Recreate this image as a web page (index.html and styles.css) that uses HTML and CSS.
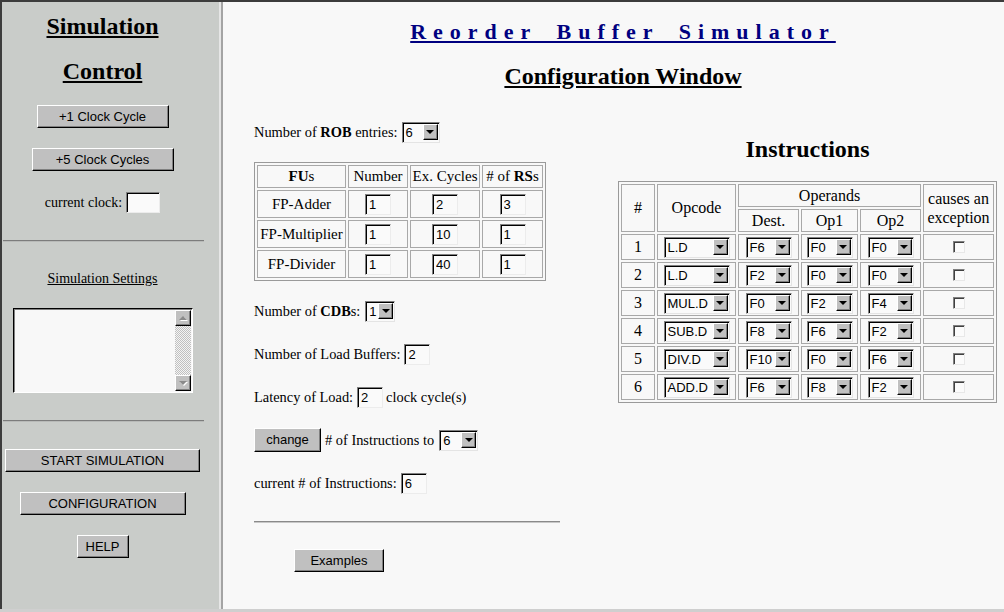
FILE: index.html
```html
<!DOCTYPE html>
<html>
<head>
<meta charset="utf-8">
<title>Reorder Buffer Simulator</title>
<link rel="stylesheet" href="styles.css">
</head>
<body>
<div class="frames">
  <aside class="control">
    <h2 class="ctl-title"><u>Simulation</u><br><u>Control</u></h2>
    <button class="awt b1">+1 Clock Cycle</button>
    <button class="awt b5">+5 Clock Cycles</button>
    <div class="clock"><span>current clock:</span><input class="field clockbox" type="text" value=""></div>
    <hr class="rule">
    <div class="settings-label">Simulation Settings</div>
    <div class="ta">
      <div class="ta-body"></div>
      <div class="vscroll">
        <span class="sb-btn up"></span>
        <span class="sb-track"></span>
        <span class="sb-btn down"></span>
      </div>
    </div>
    <hr class="rule rule2">
    <button class="awt start">START SIMULATION</button>
    <button class="awt cfg">CONFIGURATION</button>
    <button class="awt help">HELP</button>
  </aside>
  <div class="split"></div>
  <main class="config">
    <div class="page">
      <h1 class="title">Reorder Buffer Simulator</h1>
      <h2 class="subtitle">Configuration Window</h2>
      <div class="columns">
        <section class="params">
          <div class="row rob"><span>Number of <b>ROB</b> entries:</span><span class="sel w-rob"><span class="sel-val">6</span><span class="sel-btn"></span></span></div>
          <table class="fu">
            <colgroup><col class="c1"><col class="c2"><col class="c3"><col class="c4"></colgroup>
            <tr class="hd"><th><b>FU</b>s</th><th>Number</th><th>Ex. Cycles</th><th># of <b>RS</b>s</th></tr>
            <tr><td>FP-Adder</td><td><input class="field fin" type="text" value="1"></td><td><input class="field fin" type="text" value="2"></td><td><input class="field fin" type="text" value="3"></td></tr>
            <tr><td>FP-Multiplier</td><td><input class="field fin" type="text" value="1"></td><td><input class="field fin" type="text" value="10"></td><td><input class="field fin" type="text" value="1"></td></tr>
            <tr><td>FP-Divider</td><td><input class="field fin" type="text" value="1"></td><td><input class="field fin" type="text" value="40"></td><td><input class="field fin" type="text" value="1"></td></tr>
          </table>
          <div class="row cdb"><span>Number of <b>CDB</b>s:</span><span class="sel w-cdb"><span class="sel-val">1</span><span class="sel-btn"></span></span></div>
          <div class="row more"><span>Number of Load Buffers:</span><input class="field fin" type="text" value="2"></div>
          <div class="row more"><span>Latency of Load:</span><input class="field fin" type="text" value="2"><span class="tight">clock cycle(s)</span></div>
          <div class="row more"><button class="awt change">change</button><span># of Instructions to</span><span class="sel w-n"><span class="sel-val">6</span><span class="sel-btn"></span></span></div>
          <div class="row more"><span>current # of Instructions:</span><input class="field fin" type="text" value="6"></div>
          <hr class="prule">
          <button class="awt examples">Examples</button>
        </section>
        <section class="instr">
          <h2 class="instr-title">Instructions</h2>
          <table class="it">
            <colgroup><col class="k1"><col class="k2"><col class="k3"><col class="k4"><col class="k5"><col class="k6"></colgroup>
            <tr class="h1"><th rowspan="2">#</th><th rowspan="2">Opcode</th><th colspan="3">Operands</th><th rowspan="2" class="exc">causes an<br>exception</th></tr>
            <tr class="h2"><th>Dest.</th><th>Op1</th><th>Op2</th></tr>
            <tr><td>1</td><td><span class="sel w-op"><span class="sel-val">L.D</span><span class="sel-btn"></span></span></td><td><span class="sel w-reg"><span class="sel-val">F6</span><span class="sel-btn"></span></span></td><td><span class="sel w-reg"><span class="sel-val">F0</span><span class="sel-btn"></span></span></td><td><span class="sel w-reg"><span class="sel-val">F0</span><span class="sel-btn"></span></span></td><td><input type="checkbox" class="cb"></td></tr>
            <tr><td>2</td><td><span class="sel w-op"><span class="sel-val">L.D</span><span class="sel-btn"></span></span></td><td><span class="sel w-reg"><span class="sel-val">F2</span><span class="sel-btn"></span></span></td><td><span class="sel w-reg"><span class="sel-val">F0</span><span class="sel-btn"></span></span></td><td><span class="sel w-reg"><span class="sel-val">F0</span><span class="sel-btn"></span></span></td><td><input type="checkbox" class="cb"></td></tr>
            <tr><td>3</td><td><span class="sel w-op"><span class="sel-val">MUL.D</span><span class="sel-btn"></span></span></td><td><span class="sel w-reg"><span class="sel-val">F0</span><span class="sel-btn"></span></span></td><td><span class="sel w-reg"><span class="sel-val">F2</span><span class="sel-btn"></span></span></td><td><span class="sel w-reg"><span class="sel-val">F4</span><span class="sel-btn"></span></span></td><td><input type="checkbox" class="cb"></td></tr>
            <tr><td>4</td><td><span class="sel w-op"><span class="sel-val">SUB.D</span><span class="sel-btn"></span></span></td><td><span class="sel w-reg"><span class="sel-val">F8</span><span class="sel-btn"></span></span></td><td><span class="sel w-reg"><span class="sel-val">F6</span><span class="sel-btn"></span></span></td><td><span class="sel w-reg"><span class="sel-val">F2</span><span class="sel-btn"></span></span></td><td><input type="checkbox" class="cb"></td></tr>
            <tr><td>5</td><td><span class="sel w-op"><span class="sel-val">DIV.D</span><span class="sel-btn"></span></span></td><td><span class="sel w-reg"><span class="sel-val">F10</span><span class="sel-btn"></span></span></td><td><span class="sel w-reg"><span class="sel-val">F0</span><span class="sel-btn"></span></span></td><td><span class="sel w-reg"><span class="sel-val">F6</span><span class="sel-btn"></span></span></td><td><input type="checkbox" class="cb"></td></tr>
            <tr><td>6</td><td><span class="sel w-op"><span class="sel-val">ADD.D</span><span class="sel-btn"></span></span></td><td><span class="sel w-reg"><span class="sel-val">F6</span><span class="sel-btn"></span></span></td><td><span class="sel w-reg"><span class="sel-val">F8</span><span class="sel-btn"></span></span></td><td><span class="sel w-reg"><span class="sel-val">F2</span><span class="sel-btn"></span></span></td><td><input type="checkbox" class="cb"></td></tr>
          </table>
        </section>
      </div>
    </div>
  </main>
</div>
</body>
</html>
```

FILE: styles.css
```css
* { box-sizing: border-box; }
html, body { margin: 0; padding: 0; }
body {
  width: 1004px;
  height: 612px;
  overflow: hidden;
  font-family: "Liberation Serif", "Times New Roman", serif;
  color: #000;
  background: #cfcfcf;
}
.frames {
  display: flex;
  height: 612px;
  border-top: 2px solid #3c3c3c;
  border-bottom: 3px solid #cfcfcf;
}

/* ---------- left control frame ---------- */
.control {
  width: 219px;
  flex: none;
  background: #c9ccc9;
  border-left: 2px solid #3c3c3c;
  padding: 2px 16px 0 0;
  display: flex;
  flex-direction: column;
  align-items: center;
}
.ctl-title {
  margin: 0;
  font-size: 24px;
  line-height: 45px;
  font-weight: bold;
  text-align: center;
}
.awt {
  display: block;
  height: 23px;
  padding: 0;
  margin: 0;
  background: #c0c0c0;
  border: 1px solid;
  border-color: #ffffff #000000 #000000 #ffffff;
  box-shadow: inset -1px -1px 0 #808080;
  font-family: "Liberation Sans", Arial, sans-serif;
  font-size: 13px;
  color: #000;
  text-align: center;
  line-height: 20px;
}
.b1 { width: 132px; margin-top: 11px; }
.b5 { width: 142px; margin-top: 20px; }
.clock {
  display: flex;
  align-items: center;
  gap: 4px;
  margin-top: 21px;
  font-size: 14px;
}
.field {
  display: block;
  height: 21px;
  margin: 0;
  padding: 0 0 0 3px;
  border: 1px solid;
  border-color: #808080 #ececec #ececec #808080;
  box-shadow: inset 1px 1px 0 #000;
  background: #fafafa;
  font-family: "Liberation Sans", Arial, sans-serif;
  font-size: 13px;
  color: #000;
  outline: none;
}
.clockbox { width: 34px; }
.rule {
  width: 201px;
  margin: 27px 0 0 2px;
  height: 2px;
  border: 0;
  border-top: 1px solid #7c7c7c;
  border-bottom: 1px solid #b8bab8;
}
.settings-label {
  margin-top: 28px;
  font-size: 14px;
  line-height: 18px;
  text-decoration: underline;
}
.ta {
  width: 180px;
  height: 85px;
  margin-top: 20px;
  display: flex;
  border: 1px solid;
  border-color: #000 #ffffff #ffffff #000;
  box-shadow: inset 1px 1px 0 #808080;
  background: #f8f8f8;
}
.ta-body { flex: 1; }
.vscroll {
  width: 16px;
  display: flex;
  flex-direction: column;
  margin: 1px 1px 1px 0;
}
.sb-btn {
  height: 16px;
  flex: none;
  background: #c0c0c0;
  border: 1px solid;
  border-color: #ffffff #000 #000 #ffffff;
  box-shadow: inset -1px -1px 0 #808080;
  display: flex;
  align-items: center;
  justify-content: center;
}
.sb-btn::after {
  content: "";
  width: 0;
  height: 0;
  border-left: 4px solid transparent;
  border-right: 4px solid transparent;
}
.sb-btn.up::after { border-bottom: 4px solid #8a8a8a; filter: drop-shadow(1px 1px 0 #fff); }
.sb-btn.down::after { border-top: 4px solid #8a8a8a; filter: drop-shadow(1px 1px 0 #fff); }
.sb-track {
  flex: 1;
  background: repeating-conic-gradient(#c0c0c0 0 25%, #f4f4f4 0 50%) 0 0 / 2px 2px;
}
.rule2 { margin-top: 27px; }
.start { width: 195px; margin-top: 27px; }
.cfg { width: 166px; margin-top: 20px; }
.help { width: 52px; margin-top: 20px; }

/* ---------- frame divider ---------- */
.split {
  width: 4px;
  flex: none;
  border-left: 2px solid #e6e6e6;
  background: #a4a4a4;
}

/* ---------- right configuration frame ---------- */
.config {
  flex: 1;
  background: #f8f8f8;
  overflow: hidden;
}
.page {
  width: 800px;
  padding-top: 16px;
}
.title {
  margin: 0;
  font-size: 22px;
  line-height: 28px;
  font-weight: bold;
  color: #000080;
  text-align: center;
  letter-spacing: 7px;
  word-spacing: 7px;
  text-decoration: underline;
}
.subtitle {
  margin: 15px 0 0;
  font-size: 24px;
  line-height: 30px;
  font-weight: bold;
  text-align: center;
  text-decoration: underline;
}
.columns {
  display: flex;
  align-items: flex-start;
  padding-left: 31px;
}
.params {
  width: 306px;
  flex: none;
  padding-top: 29px;
  font-size: 14.4px;
}
.row {
  display: flex;
  align-items: center;
  gap: 4px;
  height: 24px;
  white-space: nowrap;
}
.row .tight { margin-left: -1px; }
.cdb { margin-top: 18px; gap: 5px; }
.more { margin-top: 19px; }

/* select imitation */
.sel {
  display: flex;
  height: 21px;
  flex: none;
  border: 1px solid;
  border-color: #808080 #e4e4e4 #e4e4e4 #808080;
  box-shadow: inset 1px 1px 0 #000;
  background: #fafafa;
  font-family: "Liberation Sans", Arial, sans-serif;
  font-size: 13px;
}
.sel-val {
  flex: 1;
  padding: 1px 0 0 3px;
  line-height: 17px;
  text-align: left;
  overflow: hidden;
}
.sel-btn {
  width: 15px;
  margin: 1px 1px 2px 0;
  flex: none;
  background: #c0c0c0;
  border: 1px solid;
  border-color: #ffffff #000 #000 #ffffff;
  box-shadow: inset -1px -1px 0 #808080;
  display: flex;
  align-items: center;
  justify-content: center;
}
.sel-btn::after {
  content: "";
  width: 0;
  height: 0;
  border-left: 4px solid transparent;
  border-right: 4px solid transparent;
  border-top: 4px solid #000;
  margin-top: 1px;
}
.w-rob { width: 38px; }
.w-cdb { width: 30px; }
.w-n { width: 39px; margin-left: 1px; }
.w-op { width: 66px; }
.w-reg { width: 46px; }

/* FU table */
.fu {
  margin-top: 18px;
  border: 1px solid #9a9a9a;
  border-spacing: 2px;
  table-layout: fixed;
  width: 292px;
  font-size: 15px;
}
.fu col.c1 { width: 89px; }
.fu col.c2 { width: 60px; }
.fu col.c3 { width: 70px; }
.fu col.c4 { width: 61px; }
.fu th, .fu td {
  border: 1px solid #a8a8a8;
  padding: 0;
  text-align: center;
  vertical-align: middle;
  white-space: nowrap;
}
.fu th { font-weight: normal; }
.fu tr { height: 28px; }
.fu tr.hd { height: 23px; }
.fin { width: 26px; }
.fu .fin { margin: 0 auto; }

.prule {
  width: 306px;
  margin: 26px 0 0;
  height: 2px;
  border: 0;
  border-top: 1px solid #8a8a8a;
  border-bottom: 1px solid #c8c8c8;
}
.examples { width: 90px; margin: 26px 0 0 40px; }
.change { width: 67px; height: 24px; }

/* Instructions */
.instr {
  margin-left: 58px;
  padding-top: 43px;
  width: 379px;
  flex: none;
}
.instr-title {
  margin: 0;
  font-size: 24px;
  line-height: 30px;
  font-weight: bold;
  text-align: center;
}
.it {
  margin-top: 17px;
  border: 1px solid #9a9a9a;
  border-spacing: 2px;
  table-layout: fixed;
  width: 379px;
  font-size: 16px;
}
.it col.k1 { width: 34px; }
.it col.k2 { width: 79px; }
.it col.k3 { width: 61px; }
.it col.k4 { width: 57px; }
.it col.k5 { width: 61px; }
.it col.k6 { width: 71px; }
.it th, .it td {
  border: 1px solid #a8a8a8;
  padding: 0;
  text-align: center;
  vertical-align: middle;
  font-weight: normal;
  white-space: nowrap;
}
.it tr { height: 26px; }
.it tr.h1, .it tr.h2 { height: 23px; }
.it .exc { line-height: 19px; }
.it .sel { margin: 0 auto; }
.cb {
  -webkit-appearance: none;
  appearance: none;
  display: block;
  width: 12px;
  height: 12px;
  margin: 0 auto;
  border: 1px solid;
  border-color: #808080 #e8e8e8 #e8e8e8 #808080;
  box-shadow: inset 1px 1px 0 #404040;
  background: #fbfbfb;
}
```
